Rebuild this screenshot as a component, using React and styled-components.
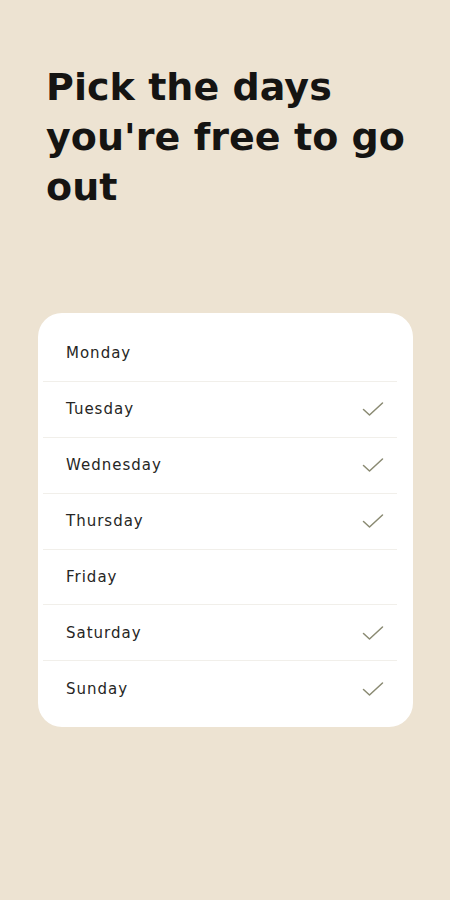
import React from "react";
import styled, { createGlobalStyle } from "styled-components";

const Global = createGlobalStyle`
  html, body { margin: 0; padding: 0; background: #ede3d2; }
  body { font-family: "DejaVu Sans", "Noto Sans", sans-serif; }
`;

const Page = styled.div`
  width: 450px;
  min-height: 900px;
  background: #ede3d2;
  box-sizing: border-box;
  padding: 62px 37px 0 38px;
  display: flex;
  flex-direction: column;
`;

const Title = styled.h1`
  margin: 0 0 0 8px;
  font-family: "DejaVu Sans", sans-serif;
  font-weight: 700;
  font-size: 38px;
  line-height: 50px;
  letter-spacing: 0.05px;
  color: #151412;
  max-width: 370px;
`;

const Card = styled.div`
  margin-top: 101px;
  background: #ffffff;
  border-radius: 24px;
  padding: 12px 16px 11px 5px;
  display: flex;
  flex-direction: column;
`;

const Row = styled.div`
  height: 55.9px;
  display: flex;
  align-items: center;
  justify-content: space-between;
  padding: 0 13px 0 23px;
  box-sizing: border-box;
  border-top: ${(p) => (p.$first ? "none" : "1px solid #f1efea")};
`;

const Label = styled.span`
  font-family: "DejaVu Sans", sans-serif;
  font-size: 15px;
  color: #262624;
  letter-spacing: 1px;
`;

const Check = () => (
  <svg width="22" height="16" viewBox="0 0 22 16" fill="none">
    <path d="M1.5 8.5 L7.5 14 L20.5 2" stroke="#8a8a72" strokeWidth="1.5" strokeLinecap="round" strokeLinejoin="round" />
  </svg>
);

const days = [
  ["Monday", false],
  ["Tuesday", true],
  ["Wednesday", true],
  ["Thursday", true],
  ["Friday", false],
  ["Saturday", true],
  ["Sunday", true],
];

export default function App() {
  return (
    <Page>
      <Global />
      <Title>Pick the days you're free to go out</Title>
      <Card>
        {days.map(([d, c], i) => (
          <Row key={d} $first={i === 0}>
            <Label>{d}</Label>
            {c && <Check />}
          </Row>
        ))}
      </Card>
    </Page>
  );
}
